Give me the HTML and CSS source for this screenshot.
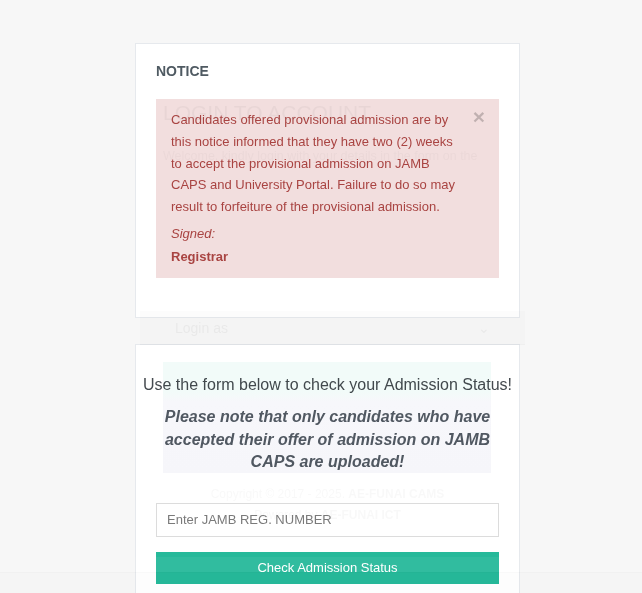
FILE: index.html
```html
<!DOCTYPE html>
<html lang="en">
<head>
<meta charset="utf-8">
<title>Admission Status</title>
<link rel="stylesheet" href="styles.css">
</head>
<body>
<main class="stack">
  <section class="card notice-card">
    <h2 class="notice-title">NOTICE</h2>
    <div class="alert">
      <span class="close">&times;</span>
      <p class="alert-text">Candidates offered provisional admission are by this notice informed that they have two (2) weeks to accept the provisional admission on JAMB CAPS and University Portal. Failure to do so may result to forfeiture of the provisional admission.</p>
      <p class="signed"><em>Signed:</em></p>
      <p class="signer"><strong>Registrar</strong></p>
    </div>
  </section>

  <section class="card status-card">
    <p class="lead">Use the form below to check your Admission Status!</p>
    <p class="note">Please note that only candidates who have accepted their offer of admission on JAMB CAPS are uploaded!</p>
    <form class="status-form">
      <input class="reg-input" type="text" placeholder="Enter JAMB REG. NUMBER">
      <button class="check-btn" type="button">Check Admission Status</button>
    </form>
  </section>
</main>

<div class="ghost" aria-hidden="true">
  <div class="g-title">LOGIN TO ACCOUNT</div>
  <div class="g-line">Welcome, kindly login with your details in the form on the</div>
  <div class="g-select"><span>Login as</span><span class="g-chev">&#8964;</span></div>
  <div class="g-box"></div>
  <div class="g-copy">Copyright &copy; 2017 - 2025. <b>AE-FUNAI CAMS</b></div>
  <div class="g-powered">Powered by <b>AE-FUNAI ICT</b></div>
  <div class="g-band"></div>
  <div class="g-floor"></div>
</div>
</body>
</html>
```

FILE: styles.css
```css
* { box-sizing: border-box; }

html, body {
  margin: 0;
  padding: 0;
  height: 100%;
  overflow: hidden;
}

body {
  background: #f7f7f7;
  font-family: "Liberation Sans", Arial, Helvetica, sans-serif;
  color: #555;
  position: relative;
}

.stack {
  width: 385px;
  margin: 43px 0 0 135px;
  display: flex;
  flex-direction: column;
  gap: 26px;
}

.card {
  background: #fff;
  border: 1px solid #e6e9ed;
}

.notice-card {
  padding: 19px 20px 40px;
  height: 275px;
}

.notice-title {
  margin: 0;
  font-size: 14px;
  font-weight: bold;
  color: #4f5a62;
  line-height: 16px;
}

.alert {
  position: relative;
  margin-top: 20px;
  background: #f2dede;
  color: #a94442;
  padding: 10px 35px 10px 15px;
  font-size: 13px;
}

.alert p { margin: 0; }

.alert-text { line-height: 21.8px; }

.signed {
  margin-top: 5px !important;
  line-height: 22px;
}

.signer {
  margin-top: 1px !important;
  line-height: 22px;
}

.close {
  position: absolute;
  top: 7px;
  right: 14px;
  font-size: 21px;
  font-weight: bold;
  line-height: 21px;
  color: #000;
  opacity: 0.2;
}

.status-card {
  padding: 29px 20px 20px;
  min-height: 260px;
}

.lead {
  margin: 0 -20px;
  text-align: center;
  white-space: nowrap;
  font-size: 16px;
  line-height: 22px;
  color: #454a4f;
}

.note {
  margin: 10px 0 0;
  text-align: center;
  font-size: 16px;
  font-weight: bold;
  font-style: italic;
  line-height: 22.5px;
  color: #535b63;
  padding: 0 6px;
}

.status-form {
  margin-top: 29px;
  display: flex;
  flex-direction: column;
  gap: 15px;
}

.reg-input {
  width: 100%;
  height: 34px;
  border: 1px solid #dcdcdc;
  background: #fff;
  padding: 0 10px;
  font-family: inherit;
  font-size: 13px;
  color: #555;
  outline: none;
}

.reg-input::placeholder { color: #7a7a7a; }

.check-btn {
  width: 100%;
  height: 32px;
  border: none;
  background: #26b99a;
  color: #fff;
  font-family: inherit;
  font-size: 13px;
  padding: 0;
}

/* faint fading login layer over the page */
.ghost {
  position: absolute;
  inset: 0;
  pointer-events: none;
  color: #444;
}

.g-title {
  position: absolute;
  left: 163px;
  top: 101px;
  font-size: 21px;
  line-height: 24px;
  opacity: 0.05;
}

.g-line {
  position: absolute;
  left: 163px;
  top: 149px;
  font-size: 12.5px;
  white-space: nowrap;
  opacity: 0.035;
}

.g-select {
  position: absolute;
  left: 140px;
  top: 311px;
  width: 385px;
  height: 34px;
  padding: 0 35px;
  display: flex;
  align-items: center;
  justify-content: space-between;
  font-size: 14px;
  background: rgba(0,0,0,0.01);
  border-bottom: 1px solid rgba(0,0,0,0.02);
}

.g-select span { opacity: 0.06; }

.g-box {
  position: absolute;
  left: 163px;
  top: 362px;
  width: 328px;
  height: 111px;
  background: linear-gradient(#f2fbf9 0, #f2fbf9 30px, #f7f7fb 40px, #f6f6fa 100%);
  mix-blend-mode: multiply;
}

.g-copy, .g-powered {
  position: absolute;
  left: 135px;
  width: 385px;
  text-align: center;
  font-size: 12px;
  opacity: 0.03;
}

.g-copy { top: 487px; }
.g-powered { top: 508px; }

.g-band {
  position: absolute;
  left: 58px;
  top: 557px;
  width: 520px;
  height: 15px;
  background: rgba(255,255,255,0.05);
}

.g-floor {
  position: absolute;
  left: 0;
  right: 0;
  top: 572px;
  bottom: 0;
  background: rgba(0,0,0,0.008);
  border-top: 1px solid rgba(0,0,0,0.015);
}
```
